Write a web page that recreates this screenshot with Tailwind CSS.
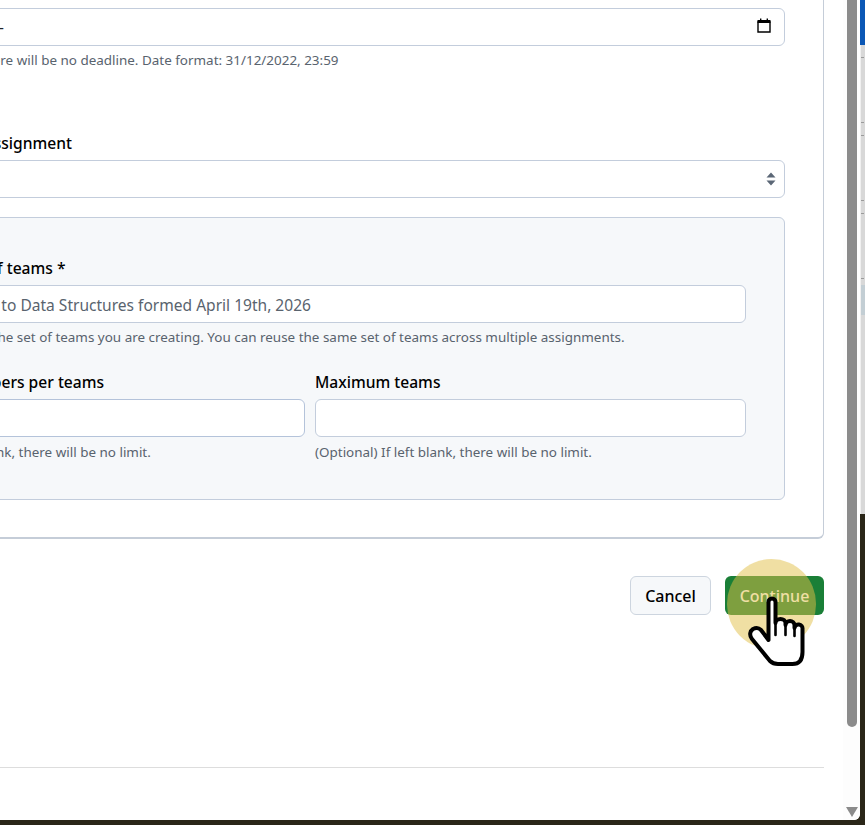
<!DOCTYPE html>
<html lang="en">
<head>
    <meta charset="UTF-8">
    <title>New team set</title>
    <script src="https://cdn.jsdelivr.net/npm/@tailwindcss/browser@4"></script>
</head>
<body class="h-[825px] w-[865px] overflow-hidden bg-[#2a2618] font-['Noto_Sans',sans-serif] text-[#1f2328]">
    <div class="flex h-[825px] w-[865px] overflow-hidden">
        <!-- browser window -->
        <div class="relative flex h-[820px] w-[860px] shrink-0 overflow-hidden rounded-br-md bg-white">
            <main class="ml-[-204px] w-[1047px] shrink-0">
                <div class="w-[1028px]">
                    <section class="h-[539px] rounded-b-md border border-b-2 border-t-0 border-[#c5cdd8] pl-[38px] pr-[38px] pt-[8px]">
                        <div class="flex h-[38px] items-center justify-between rounded-md border border-[#c3cddc] pl-3 pr-[13px]">
                            <span class="w-[156px] whitespace-nowrap text-right text-[16px] leading-[20px] text-[#1f2328]">dd/mm/yyyy, -</span>
                            <svg class="mb-[3px] h-[15px] w-[14px]" viewBox="0 0 14 15"><path d="M1 4h12v10H1z" fill="#fff" stroke="#000" stroke-width="1.4"/><path d="M0.5 2h13v3H0.5zM3 0.5h1.4V2H3zM9.6 0.5H11V2H9.6z" fill="#000"/></svg>
                        </div>
                        <p class="mt-[6px] text-[13.45px] leading-[16px] text-[#59636e]">(Optional) If left blank, there will be no deadline. Date format: 31/12/2022, 23:59</p>
                        <label class="-ml-[4px] mt-[64px] block text-[15.6px] font-medium leading-[22px] text-black">Use set of teams for assignment</label>
                        <div class="mt-[6px] flex h-[38px] items-center justify-end rounded-md border border-[#c3cddc] pr-[8px]">
                            <svg class="h-[14px] w-[10px]" viewBox="0 0 10 14"><path d="M5 0.5 9.5 5.5H0.5zM0.5 8.5h9L5 13.5z" fill="#5b6776"/></svg>
                        </div>
                        <div class="mt-[19px] h-[283px] rounded-md border border-[#c3cddc] bg-[#f6f8fa] px-[38px] pt-[39px]">
                            <label class="block text-[15.6px] font-medium leading-[22px] text-black">Name your set of teams *</label>
                            <div class="mt-[6px] flex h-[38px] items-center rounded-md border border-[#c3cddc] bg-white pl-[10px] pr-3 pt-[3px] text-[15.55px] text-[#59636e]">Teams for Intro to Data Structures formed April 19th, 2026</div>
                            <p class="mt-[6px] indent-[9px] text-[13.45px] leading-[16px] text-[#59636e]">Enter a name for the set of teams you are creating. You can reuse the same set of teams across multiple assignments.</p>
                            <div class="mt-[26px] grid grid-cols-2 gap-[10px]">
                                <div>
                                    <label class="block text-[15.6px] font-medium leading-[22px] text-black">Maximum members per teams</label>
                                    <div class="mt-[6px] h-[38px] rounded-md border border-[#b4c3da] bg-white"></div>
                                    <p class="mt-[7px] text-[13.45px] leading-[16px] text-[#59636e]">(Optional) If left blank, there will be no limit.</p>
                                </div>
                                <div>
                                    <label class="block text-[15.6px] font-medium leading-[22px] text-black">Maximum teams</label>
                                    <div class="mt-[6px] h-[38px] rounded-md border border-[#c3cddc] bg-white"></div>
                                    <p class="mt-[7px] text-[13.45px] leading-[16px] text-[#59636e]">(Optional) If left blank, there will be no limit.</p>
                                </div>
                            </div>
                        </div>
                    </section>
                    <div class="mt-[37px] flex justify-end gap-[14px]">
                        <button class="h-[39px] w-[81px] rounded-md border border-[#cdd5df] bg-[#f6f8fa] text-[16px] font-medium text-black">Cancel</button>
                        <button class="h-[39px] w-[99px] rounded-md bg-[#1a7f37] text-[16px] font-medium text-white">Continue</button>
                    </div>
                    <div class="mt-[152px] border-t border-[#dddddd]"></div>
                </div>
            </main>

            <!-- scrollbar -->
            <div class="relative h-full w-[17px] shrink-0 bg-[#fdfdfd]">
                <div class="ml-[4px] h-[727px] w-[10px] rounded-b-full bg-[#8b8b8b]"></div>
                <svg class="absolute left-[3px] top-[807px] h-[10px] w-[12px]" viewBox="0 0 12 10"><path d="M0 0h12L6 10z" fill="#8b8b8b"/></svg>
            </div>

            <!-- click highlight and cursor -->
            <div class="absolute left-[727px] top-[559px] h-[90px] w-[89px] rounded-full bg-[#e1bf47]/50"></div>
            <svg class="absolute left-[740px] top-[590px] h-[80px] w-[70px]" viewBox="0 0 70 80">
                <path d="M28.500 50V12a3.500 3.500 0 0 1 7 0V33a5 4 0 0 1 10 0v2a4.500 4 0 0 1 9 0v3a4 4 0 0 1 8 1V62q0 12-10 12H38q-5 0-8-3L12 49c-3-4-2-8 1-10 3-1.500 6-1 8 1z" fill="#fff" stroke="#000" stroke-width="4" stroke-linejoin="round"/>
                <path d="M35.500 33v12M45.500 35v10M54.500 38v8" fill="none" stroke="#000" stroke-width="2.6" stroke-linecap="round"/>
            </svg>
        </div>

        <!-- desktop behind the window -->
        <div class="flex h-[825px] w-[5px] shrink-0 flex-col">
            <div class="h-[45px] bg-[#0b57b5]"></div>
            <div class="h-[469px] border-l border-[#f0f0f0] bg-[#d8d8d8]">
                <div class="mt-[12px] h-px w-[3px] bg-[#9a9a9a]"></div>
                <div class="mt-[64px] h-px w-[3px] bg-[#9a9a9a]"></div>
                <div class="mt-[12px] h-px w-[3px] bg-[#9a9a9a]"></div>
                <div class="mt-[64px] h-px w-[3px] bg-[#9a9a9a]"></div>
                <div class="mt-[12px] h-px w-[3px] bg-[#9a9a9a]"></div>
                <div class="mt-[64px] h-px w-[3px] bg-[#9a9a9a]"></div>
                <div class="mt-[6px] h-[30px] bg-[#c3ced4]"></div>
            </div>
            <div class="flex-1 bg-[#2a2618]"></div>
        </div>
    </div>
</body>
</html>
